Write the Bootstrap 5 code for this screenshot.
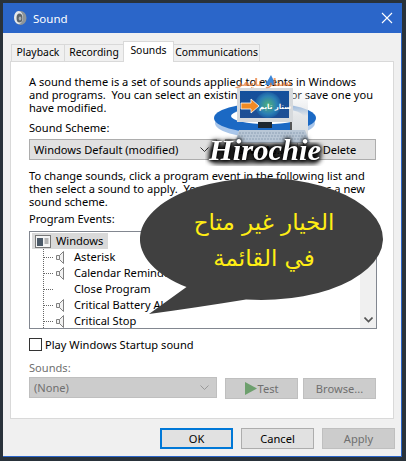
<!DOCTYPE html>
<html lang="en">
<head>
  <meta charset="UTF-8">
  <meta name="viewport" content="width=device-width, initial-scale=1.0">
  <title>Sound</title>
  <link href="https://cdn.jsdelivr.net/npm/bootstrap@5.3.0/dist/css/bootstrap.min.css" rel="stylesheet">
  <style>
    html, body { height: 100%; }
    body {
      background: #29323a;
      font-family: "Noto Sans", "Open Sans", sans-serif;
      font-size: 11.1px;
      line-height: 13px;
      color: #000;
      overflow: hidden;
    }
    .stage { position: relative; width: 406px; height: 461px; padding: 3px 3px 4px 3px; }
    .dlg { width: 399px; height: 454px; background: #f0f0f0; border: 1px solid #2b66c9; border-top: 0; border-left: 0; }
    .cap { height: 30px; background: #2b66c9; color: #fff; padding-left: 10px; gap: 6px; font-size: 11.5px; }
    .cap-x { margin-left: auto; margin-right: 8px; }
    .tabbar { padding: 8px 0 0 9px; height: 28px; border: 0; }
    .tabbar .nav-link {
      height: 17px; margin: 3px 0 0 -1px; padding: 0; text-align: center; border: 1px solid #d9d9d9; border-bottom: 0; border-radius: 0;
      background: #f0f0f0; color: #000; font-size: 10.4px; line-height: 15px;
    }
    .tabbar .nav-link.active { height: 21px; margin-top: 0; background: #fff; border-color: #d9d9d9; color: #000; position: relative; z-index: 1; line-height: 16px; }
    .tabbar .nav-item:nth-child(1) .nav-link { width: 54px; }
    .tabbar .nav-item:nth-child(2) .nav-link { width: 60px; }
    .tabbar .nav-item:nth-child(3) .nav-link { width: 51px; }
    .tabbar .nav-item:nth-child(4) .nav-link { width: 87px; }
    .pane { width: 384px; height: 358px; margin-left: 7px; background: #fff; border: 1px solid #d9d9d9; padding: 13px 16px 0 18px; }
    .para { margin: 0; white-space: pre; }
    .ctl-row { display: flex; width: 348px; }
    .pick {
      width: 188px; height: 21px; border: 1px solid #adadad; background: #e1e1e1; padding: 0 7px 0 4px;
      display: flex; align-items: center; justify-content: space-between;
    }
    .pick.off { background: #ccc; border-color: #bfbfbf; color: #6f6f6f; }
    .winbtn {
      width: 73px; height: 21px; padding: 0; border: 1px solid #adadad; border-radius: 0; background: #e1e1e1; color: #000;
      font-size: 11.1px; line-height: 17px; display: flex; align-items: center; justify-content: center; gap: 1px;
    }
    .winbtn.off, .winbtn.off:disabled { background: #ccc; border-color: #bfbfbf; color: #6f6f6f; opacity: 1; }
    .winbtn.dflt { border: 2px solid #0078d7; }
    .tight { margin-left: -3px; }
    .drop1 { margin-top: 1px; }
    .tree { position: relative; width: 348px; height: 98px; border: 1px solid #828790; overflow: hidden; margin-top: 6px; }
    .tree-top { width: 76px; height: 16px; margin: 1px 0 0 2px; padding-left: 3px; background: #d9d9d9; gap: 5px; }
    .tree-top span { margin-bottom: 2px; }
    .tree-row { height: 16px; padding-left: 13px; gap: 1px; white-space: nowrap; }
    .tree-row > span:last-of-type { margin-bottom: 2px; }
    .tree-row .dots { width: 10px; border-top: 1px dotted #666; }
    .tree-row .gap-ico { width: 19px; height: 13px; flex: none; }
    .vline { position: absolute; left: 13px; top: 17px; bottom: 0; border-left: 1px dotted #666; }
    .sbar { position: absolute; top: 0; right: 0; bottom: 0; width: 16px; background: #f0f0f0; display: flex; align-items: flex-end; justify-content: center; padding-bottom: 5px; }
    .tick { width: 13px; height: 13px; border: 1px solid #333; background: #fff; flex: none; }
    .muted-lbl { color: #6f6f6f; }
    .foot { width: 392px; justify-content: flex-end; gap: 8px; margin-top: 9px; }
    .logo { position: absolute; left: 205px; top: 70px; width: 122px; height: 100px; }
    .logo-name {
      font-family: "Liberation Serif", serif; font-style: italic; font-weight: 700; font-size: 30px;
      filter: drop-shadow(0 0 1.500px #000) drop-shadow(0 0 2.500px #000);
    }
    .logo-ar { font-family: "DejaVu Sans", sans-serif; font-size: 11px; font-weight: 700; }
    .logo-ar-sm { font-family: "DejaVu Sans", sans-serif; font-size: 7px; font-weight: 700; }
    .bubble { position: absolute; left: 140px; top: 178px; width: 246px; height: 145px; }
    .bubble-txt {
      position: absolute; left: 153px; top: 204px; width: 222px; text-align: center; color: #ffee14;
      font-family: "DejaVu Sans", sans-serif; font-size: 23px; line-height: 36px; white-space: nowrap;
    }
  </style>
</head>
<body>
  <div class="stage">
    <div class="dlg d-flex flex-column">
      <!-- title bar -->
      <div class="cap d-flex align-items-center">
        <svg width="14" height="16" viewBox="0 0 14 16">
          <ellipse cx="7.5" cy="8" rx="6" ry="7" fill="#8d9499"/>
          <ellipse cx="5.5" cy="7.5" rx="4.5" ry="6.5" fill="#e6e9eb"/>
          <ellipse cx="6.5" cy="8" rx="3" ry="4.5" fill="#5c6469"/>
          <ellipse cx="7" cy="8.5" rx="1.3" ry="2" fill="#a9afb3"/>
        </svg>
        <span>Sound</span>
        <svg class="cap-x" width="12" height="12" viewBox="0 0 12 12"><path d="M1 1l10 10M11 1L1 11" stroke="#fff" stroke-width="1.1" fill="none"/></svg>
      </div>

      <!-- tabs -->
      <ul class="nav nav-tabs tabbar">
        <li class="nav-item"><a class="nav-link" href="#">Playback</a></li>
        <li class="nav-item"><a class="nav-link" href="#">Recording</a></li>
        <li class="nav-item"><a class="nav-link active" href="#">Sounds</a></li>
        <li class="nav-item"><a class="nav-link" href="#">Communications</a></li>
      </ul>

      <div class="pane">
        <p class="para">A sound theme is a set of sounds applied to events in Windows
and programs.  You can select an existing scheme or save one you
have modified.</p>
        <p class="para" style="margin-top:7px">Sound Scheme:</p>
        <div class="ctl-row gap-2" style="margin-top:5px">
          <div class="pick"><span>Windows Default (modified)</span>
            <svg width="9" height="6" viewBox="0 0 9 6"><path d="M.5 .5l4 4 4-4" stroke="#333" fill="none"/></svg>
          </div>
          <button class="btn winbtn" type="button">Save As...</button>
          <button class="btn winbtn tight" type="button">Delete</button>
        </div>
        <p class="para" style="margin-top:9px">To change sounds, click a program event in the following list and
then select a sound to apply.  You can save the changes as a new
sound scheme.</p>
        <p class="para" style="margin-top:4px">Program Events:</p>

        <div class="tree">
          <div class="tree-top d-flex align-items-center">
            <svg width="16" height="13" viewBox="0 0 16 13">
              <rect x=".5" y=".5" width="15" height="12" fill="#f4f4f4" stroke="#777"/>
              <rect x="2" y="3" width="6" height="8" fill="#4c5a68"/>
              <path d="M9.5 4h4M9.5 6h4M9.5 8h4" stroke="#777"/>
            </svg>
            <span>Windows</span>
          </div>
          <div class="vline"></div>
          <div class="tree-row d-flex align-items-center"><span class="dots"></span>
            <svg class="gap-ico" viewBox="0 0 19 13"><path d="M2.5 4.5h3v4h-3zM5.500 4.500l4-4v12l-4-4" fill="#f2f2f2" stroke="#808080"/></svg><span>Asterisk</span></div>
          <div class="tree-row d-flex align-items-center"><span class="dots"></span>
            <svg class="gap-ico" viewBox="0 0 19 13"><path d="M2.5 4.5h3v4h-3zM5.500 4.500l4-4v12l-4-4" fill="#f2f2f2" stroke="#808080"/></svg><span>Calendar Reminder</span></div>
          <div class="tree-row d-flex align-items-center"><span class="dots"></span>
            <span class="gap-ico"></span><span>Close Program</span></div>
          <div class="tree-row d-flex align-items-center"><span class="dots"></span>
            <svg class="gap-ico" viewBox="0 0 19 13"><path d="M2.5 4.5h3v4h-3zM5.500 4.500l4-4v12l-4-4" fill="#f2f2f2" stroke="#808080"/></svg><span>Critical Battery Alarm</span></div>
          <div class="tree-row d-flex align-items-center"><span class="dots"></span>
            <svg class="gap-ico" viewBox="0 0 19 13"><path d="M2.5 4.5h3v4h-3zM5.500 4.500l4-4v12l-4-4" fill="#f2f2f2" stroke="#808080"/></svg><span>Critical Stop</span></div>
          <div class="sbar">
            <svg width="9" height="6" viewBox="0 0 9 6"><path d="M.5 .5l4 4 4-4" stroke="#555" stroke-width="1.6" fill="none"/></svg>
          </div>
        </div>

        <div class="d-flex align-items-center" style="margin-top:9px;gap:3px">
          <span class="tick"></span><span>Play Windows Startup sound</span>
        </div>
        <p class="para muted-lbl" style="margin-top:10px">Sounds:</p>
        <div class="ctl-row gap-2" style="margin-top:3px">
          <div class="pick off"><span>(None)</span>
            <svg width="9" height="6" viewBox="0 0 9 6"><path d="M.5 .5l4 4 4-4" stroke="#999" fill="none"/></svg>
          </div>
          <button class="btn winbtn off drop1" type="button" disabled>
            <svg width="12" height="13" viewBox="0 0 12 13"><path d="M0 0l12 6.5L0 13z" fill="#6d9f6d"/></svg>Test
          </button>
          <button class="btn winbtn off tight drop1" type="button" disabled>Browse...</button>
        </div>
      </div>

      <div class="foot d-flex">
        <button class="btn winbtn dflt" type="button">OK</button>
        <button class="btn winbtn" type="button">Cancel</button>
        <button class="btn winbtn off" type="button" disabled>Apply</button>
      </div>
    </div>

    <!-- logo stamped over the dialog -->
    <svg class="logo" viewBox="0 0 122 100">
      <defs>
        <linearGradient id="scr" x1="0" y1="0" x2="0" y2="1"><stop offset="0" stop-color="#14509c"/><stop offset="1" stop-color="#1f4f94"/></linearGradient>
        <linearGradient id="twr" x1="0" y1="0" x2="0" y2="1"><stop offset="0" stop-color="#eceef0" stop-opacity=".15"/><stop offset=".5" stop-color="#e4e6e8"/><stop offset="1" stop-color="#d8dbde"/></linearGradient>
        <radialGradient id="globe"><stop offset="0" stop-color="#4fb07a"/><stop offset=".7" stop-color="#2a7fb5"/><stop offset="1" stop-color="#1d5fa3"/></radialGradient>
        <filter id="soft"><feGaussianBlur stdDeviation="2.6"/></filter>
      </defs>
      <path d="M66 5l5 10H60z" fill="#3d86d6"/>
      <ellipse cx="60" cy="53" rx="50" ry="15" fill="#a9c6ea"/>
      <ellipse cx="60" cy="48" rx="51" ry="15" fill="#1b69c4"/>
      <ellipse cx="62" cy="46" rx="36" ry="8" fill="#fff"/>
      <rect x="85" y="22" width="18" height="48" fill="url(#twr)"/>
      <rect x="85" y="38" width="2" height="32" fill="#555"/>
      <rect x="32" y="18" width="56" height="34" fill="#d6d9dc"/>
      <rect x="35" y="21" width="49" height="27" fill="url(#scr)"/>
      <circle cx="63" cy="35" r="13" fill="url(#globe)"/>
      <path d="M36 33h10v-4l8 7-8 7v-4H36z" fill="#f08a24" stroke="#fff" stroke-width=".8"/>
      <text class="logo-ar-sm" x="70" y="39" fill="#fff" text-anchor="middle">ستار تايم</text>
      <text class="logo-ar" x="59" y="16" fill="#e8742a" text-anchor="middle" opacity=".7">ستار تايمز</text>
      <rect x="53" y="52" width="14" height="6" fill="#1d2730"/>
      <path d="M34 60h66l5 13H30z" fill="#b9c7d6"/>
      <path d="M34 63h66M33 66h68M32 69h70" stroke="#8fa2b6" stroke-dasharray="2 1"/>
      <rect x="4" y="74" width="112" height="20" rx="8" fill="#000" filter="url(#soft)" opacity=".8"/>
      <text class="logo-name" x="60" y="90" fill="#fff" text-anchor="middle" textLength="112" lengthAdjust="spacingAndGlyphs">Hirochie</text>
    </svg>

    <!-- speech bubble -->
    <svg class="bubble" viewBox="0 0 246 145">
      <path d="M9 136L46.500 109A121.500 61 0 1 1 106 121.500C72 127 40 132 9 136Z" fill="#404040"/>
    </svg>
    <div class="bubble-txt" dir="rtl" lang="ar">الخيار غير متاح<br>في القائمة</div>
  </div>
</body>
</html>
